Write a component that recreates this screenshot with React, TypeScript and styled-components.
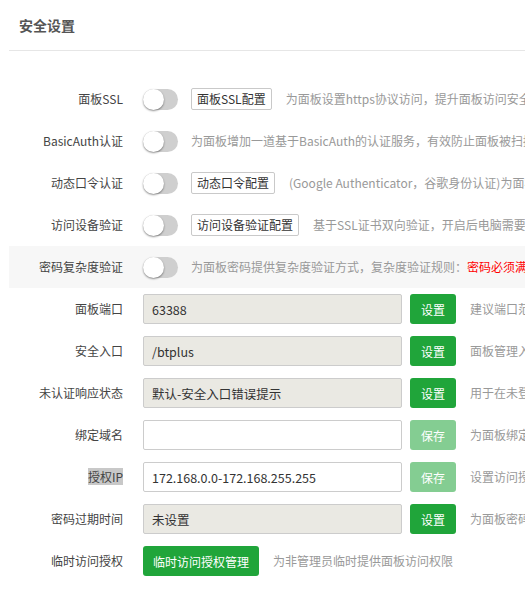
import React from "react";
import styled, { createGlobalStyle } from "styled-components";

const Global = createGlobalStyle`
  html, body { margin: 0; padding: 0; background: #fff; overflow: hidden; }
  body { font-family: "Noto Sans CJK SC", "Noto Sans", sans-serif; font-size: 12px; color: #333; }
  * { box-sizing: border-box; }
`;

const Page = styled.div`
  width: 525px;
  height: 608px;
  overflow: hidden;
  padding-left: 9px;
`;

const Header = styled.div`
  height: 51px;
  border-bottom: 1px solid #e6e6e6;
  padding-left: 10px;
  display: flex;
  align-items: center;
  font-size: 14px;
  font-weight: 600;
  color: #555;
  width: 700px;
  margin-bottom: 27px;
`;

const Row = styled.div<{ $shade?: boolean; $h?: number }>`
  display: flex;
  align-items: center;
  height: ${(p) => p.$h ?? 42}px;
  width: 900px;
  white-space: nowrap;
  background: ${(p) => (p.$shade ? "#f7f7f7" : "transparent")};
`;

const Label = styled.div`
  width: 134px;
  flex: none;
  text-align: right;
  padding-right: 20px;
  color: #444;
  line-height: 20px;
`;

const Selected = styled.span`
  background: #c8c8c8;
`;

const Track = styled.div`
  width: 35px;
  height: 21px;
  border-radius: 11px;
  background: #cfcfcf;
  position: relative;
  flex: none;
  margin-top: 1px;
`;

const Knob = styled.div`
  position: absolute;
  left: 0;
  top: 0;
  width: 21px;
  height: 21px;
  border-radius: 50%;
  background: #fff;
  box-shadow: 0 1px 2px rgba(0, 0, 0, 0.45);
`;

const OutlineButton = styled.div`
  margin-left: 13px;
  height: 22px;
  padding: 0 5px;
  border: 1px solid #c9c9c9;
  border-radius: 2px;
  background: #fff;
  color: #333;
  font-size: 12px;
  line-height: 20px;
  flex: none;
`;

const Desc = styled.div<{ $gap?: number }>`
  margin-left: ${(p) => p.$gap ?? 14}px;
  color: #999;
  line-height: 20px;
`;

const Red = styled.span`
  color: #ff0000;
`;

const Input = styled.div<{ $disabled?: boolean }>`
  width: 259px;
  height: 30px;
  flex: none;
  border: 1px solid #cccccc;
  border-radius: 2px;
  background: ${(p) => (p.$disabled ? "#eae9e3" : "#fff")};
  color: #333;
  padding-left: 8px;
  display: flex;
  align-items: center;
  font-size: 12.5px;
`;

const GreenButton = styled.div<{ $disabled?: boolean; $gap?: number; $pad?: number }>`
  margin-left: ${(p) => p.$gap ?? 8}px;
  height: 30px;
  padding: 0 ${(p) => p.$pad ?? 11}px;
  border-radius: 3px;
  background: ${(p) => (p.$disabled ? "#84cd92" : "#20a53a")};
  color: #fff;
  font-size: 12px;
  display: flex;
  align-items: center;
  flex: none;
`;

const Toggle = () => (
  <Track>
    <Knob />
  </Track>
);

type InputRowData = {
  label: React.ReactNode;
  value: string;
  disabled: boolean;
  btn: string;
  btnDisabled?: boolean;
  desc: string;
};

const inputRows: InputRowData[] = [
  { label: "面板端口", value: "63388", disabled: true, btn: "设置", desc: "建议端口范围8888 - 65535" },
  { label: "安全入口", value: "/btplus", disabled: true, btn: "设置", desc: "面板管理入口，设置后只能通过指定安全入口登录面板" },
  { label: "未认证响应状态", value: "默认-安全入口错误提示", disabled: true, btn: "设置", desc: "用于在未登录且安全入口错误时的响应提示" },
  { label: "绑定域名", value: "", disabled: false, btn: "保存", btnDisabled: true, desc: "为面板绑定一个访问域名" },
  { label: <Selected>授权IP</Selected>, value: "172.168.0.0-172.168.255.255", disabled: false, btn: "保存", btnDisabled: true, desc: "设置访问授权IP，多个请使用逗号分隔" },
  { label: "密码过期时间", value: "未设置", disabled: true, btn: "设置", desc: "为面板密码设置过期时间" },
];

export default function App() {
  return (
    <>
      <Global />
      <Page>
        <Header>安全设置</Header>
        <Row>
          <Label>面板SSL</Label>
          <Toggle />
          <OutlineButton>面板SSL配置</OutlineButton>
          <Desc>为面板设置https协议访问，提升面板访问安全性</Desc>
        </Row>
        <Row $h={41}>
          <Label>BasicAuth认证</Label>
          <Toggle />
          <Desc $gap={13}>为面板增加一道基于BasicAuth的认证服务，有效防止面板被扫描发现</Desc>
        </Row>
        <Row $h={43}>
          <Label>动态口令认证</Label>
          <Toggle />
          <OutlineButton>动态口令配置</OutlineButton>
          <Desc>(Google Authenticator，谷歌身份认证)为面板开启二次验证</Desc>
        </Row>
        <Row $h={42}>
          <Label>访问设备验证</Label>
          <Toggle />
          <OutlineButton>访问设备验证配置</OutlineButton>
          <Desc>基于SSL证书双向验证，开启后电脑需要安装证书才能访问面板</Desc>
        </Row>
        <Row $shade $h={42}>
          <Label>密码复杂度验证</Label>
          <Toggle />
          <Desc $gap={13}>
            为面板密码提供复杂度验证方式，复杂度验证规则：<Red>密码必须满足8位以上，包含大小写字母、数字、特殊字符</Red>
          </Desc>
        </Row>
        {inputRows.map((r, i) => (
          <Row key={i}>
            <Label>{r.label}</Label>
            <Input $disabled={r.disabled}>{r.value}</Input>
            <GreenButton $disabled={r.btnDisabled}>{r.btn}</GreenButton>
            <Desc>{r.desc}</Desc>
          </Row>
        ))}
        <Row>
          <Label>临时访问授权</Label>
          <GreenButton $gap={0} $pad={10}>临时访问授权管理</GreenButton>
          <Desc>为非管理员临时提供面板访问权限</Desc>
        </Row>
      </Page>
    </>
  );
}
